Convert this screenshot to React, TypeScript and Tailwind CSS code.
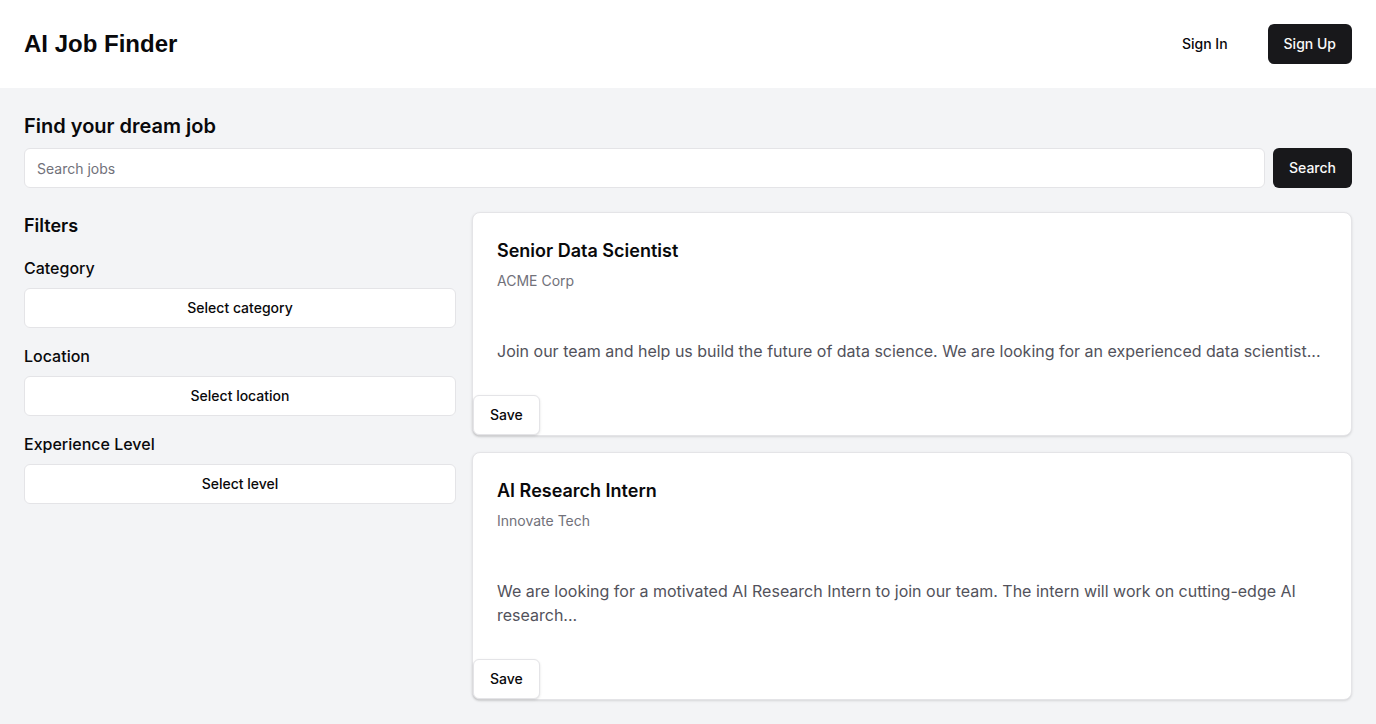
import { useState } from "react";

interface Job {
  id: number;
  title: string;
  company: string;
  description: string;
}

const jobs: Job[] = [
  {
    id: 1,
    title: "Senior Data Scientist",
    company: "ACME Corp",
    description: "Join our team and help us build the future of data science. We are looking for an experienced data scientist...",
  },
  {
    id: 2,
    title: "AI Research Intern",
    company: "Innovate Tech",
    description:
      "We are looking for a motivated AI Research Intern to join our team. The intern will work on cutting-edge AI research...",
  },
];

const filters = [
  { label: "Category", placeholder: "Select category" },
  { label: "Location", placeholder: "Select location" },
  { label: "Experience Level", placeholder: "Select level" },
];

function JobCard({ job }: { job: Job }) {
  return (
    <article className="rounded-lg border border-[#e4e4e7] bg-white shadow-sm">
      <div className="flex flex-col gap-1.5 p-6">
        <h3 className="text-lg leading-7 font-semibold text-[#09090b]">{job.title}</h3>
        <p className="text-sm leading-5 text-[#71717a]">{job.company}</p>
      </div>
      <div className="p-6 pt-6">
        <p className="text-base leading-6 text-[#52525b]">{job.description}</p>
      </div>
      <button type="button" className="mt-2 h-10 rounded-md border border-[#e4e4e7] bg-white px-4 text-sm font-medium text-[#09090b] shadow-sm">
        Save
      </button>
    </article>
  );
}

export default function App() {
  const [query, setQuery] = useState("");

  return (
    <div className="min-h-screen bg-[#f3f4f6] font-['Inter',sans-serif] text-[#09090b]">
      <header className="flex h-[88px] items-center justify-between bg-white px-6">
        <h1 className="font-['Liberation_Sans',Arial,sans-serif] text-2xl font-bold">AI Job Finder</h1>
        <div className="flex items-center gap-6">
          <button type="button" className="h-10 rounded-md px-4 text-sm font-medium">Sign In</button>
          <button type="button" className="h-10 rounded-md bg-[#18181b] px-4 text-sm font-medium text-[#fafafa]">Sign Up</button>
        </div>
      </header>

      <main className="p-6">
        <h2 className="text-xl leading-7 font-semibold">Find your dream job</h2>
        <div className="mt-2 flex gap-2">
          <input
            value={query}
            onChange={(e) => setQuery(e.target.value)}
            placeholder="Search jobs"
            className="h-10 flex-1 rounded-md border border-[#e4e4e7] bg-white px-3 text-sm outline-none placeholder:text-[#71717a]"
          />
          <button type="button" className="h-10 rounded-md bg-[#18181b] px-4 text-sm font-medium text-[#fafafa]">Search</button>
        </div>

        <div className="mt-6 grid grid-cols-3 gap-4">
          <aside>
            <h2 className="text-lg leading-7 font-semibold">Filters</h2>
            <div className="mt-4 flex flex-col gap-4">
              {filters.map((f) => (
                <div key={f.label} className="flex flex-col gap-2">
                  <label className="text-base leading-6 font-medium">{f.label}</label>
                  <button type="button" className="h-10 w-full rounded-md border border-[#e4e4e7] bg-white text-sm font-medium">
                    {f.placeholder}
                  </button>
                </div>
              ))}
            </div>
          </aside>
          <section className="col-span-2 flex flex-col gap-4">
            {jobs.map((job) => (
              <JobCard key={job.id} job={job} />
            ))}
          </section>
        </div>
      </main>
    </div>
  );
}
